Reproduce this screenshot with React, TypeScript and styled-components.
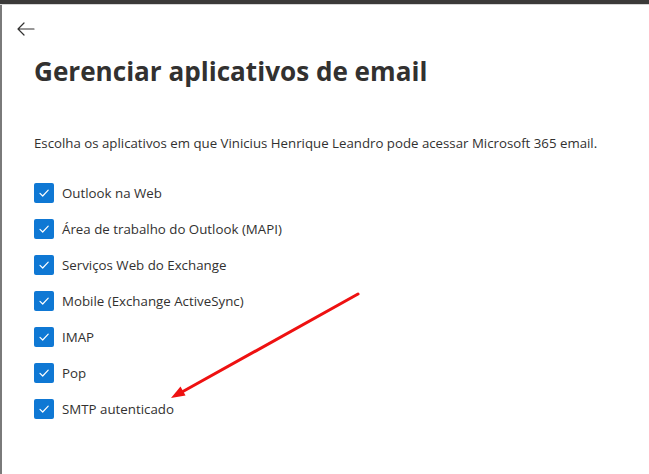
import React from 'react';
import styled, {createGlobalStyle} from 'styled-components';

const GlobalStyle = createGlobalStyle`
  html, body {
    margin: 0;
    padding: 0;
    background: #ffffff;
  }
  body {
    font-family: 'Open Sans', 'Noto Sans', sans-serif;
    color: #323130;
  }
`;

const Frame = styled.div`
  width: 649px;
  height: 474px;
  position: relative;
  overflow: hidden;
  display: flex;
  flex-direction: column;
  background: #ffffff;
`;

const TopBar = styled.div`
  height: 4px;
  background: #3b3a39;
  border-bottom: 1px solid #d6d6d6;
  flex-shrink: 0;
`;

const Body = styled.div`
  flex: 1;
  display: flex;
`;

const SideStrip = styled.div`
  width: 2px;
  background: #7a7a7a;
  flex-shrink: 0;
`;

const Panel = styled.div`
  flex: 1;
  display: flex;
  flex-direction: column;
  padding: 16px 0 0 15px;
`;

const BackButton = styled.button`
  width: 20px;
  height: 16px;
  padding: 0;
  border: none;
  background: transparent;
  display: flex;
  align-items: center;
  justify-content: flex-start;
  color: #323130;
  cursor: pointer;
`;

const Content = styled.div`
  display: flex;
  flex-direction: column;
  padding-left: 17px;
`;

const Title = styled.h1`
  margin: 16px 0 0;
  font-family: 'Open Sans', 'Noto Sans', sans-serif;
  font-weight: 700;
  font-size: 26.1px;
  line-height: 36px;
  color: #323130;
`;

const Description = styled.p`
  margin: 44px 0 0;
  font-size: 13.25px;
  line-height: 20px;
  color: #323130;
`;

const OptionList = styled.ul`
  list-style: none;
  margin: 30px 0 0;
  padding: 0;
  display: flex;
  flex-direction: column;
  gap: 16px;
`;

const Option = styled.li`
  display: flex;
  align-items: center;
  gap: 8px;
  height: 20px;
  font-size: 13.3px;
  color: #323130;
`;

const Box = styled.span`
  width: 20px;
  height: 20px;
  border-radius: 2px;
  background: #0f78d4;
  display: flex;
  align-items: center;
  justify-content: center;
  flex-shrink: 0;
`;

const Annotation = styled.svg`
  position: absolute;
  left: 0;
  top: 0;
  pointer-events: none;
`;

const options = [
  'Outlook na Web',
  'Área de trabalho do Outlook (MAPI)',
  'Serviços Web do Exchange',
  'Mobile (Exchange ActiveSync)',
  'IMAP',
  'Pop',
  'SMTP autenticado',
];

const Check = () => (
  <svg width="12" height="12" viewBox="0 0 12 12" fill="none">
    <path d="M2 6.3 L4.7 9 L10.2 3.2" stroke="#ffffff" strokeWidth="1.2" strokeLinecap="round" strokeLinejoin="round" />
  </svg>
);

const App: React.FC = () => (
  <Frame>
    <GlobalStyle />
    <TopBar />
    <Body>
      <SideStrip />
      <Panel>
        <BackButton aria-label="Voltar">
          <svg width="18" height="14" viewBox="0 0 18 14" fill="none">
            <path d="M7 1 L1 7 L7 13 M1 7 H17" stroke="#323130" strokeWidth="1.2" strokeLinecap="round" strokeLinejoin="round" />
          </svg>
        </BackButton>
        <Content>
          <Title>Gerenciar aplicativos de email</Title>
          <Description>
            Escolha os aplicativos em que Vinicius Henrique Leandro pode acessar Microsoft 365 email.
          </Description>
          <OptionList>
            {options.map((label) => (
              <Option key={label}>
                <Box>
                  <Check />
                </Box>
                {label}
              </Option>
            ))}
          </OptionList>
        </Content>
      </Panel>
    </Body>
    <Annotation width="649" height="474" viewBox="0 0 649 474">
      <line x1="358" y1="294" x2="182" y2="392" stroke="#ee1111" strokeWidth="3" strokeLinecap="round" />
      <polygon points="171,398 180.5,386.5 185.5,395.5" fill="#ee1111" />
    </Annotation>
  </Frame>
);

export default App;
